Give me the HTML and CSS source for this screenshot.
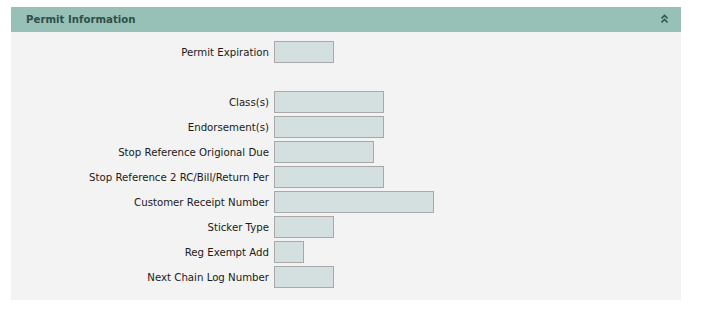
FILE: index.html
```html
<!DOCTYPE html>
<html lang="en">
<head>
    <meta charset="UTF-8">
    <title>Permit Information</title>
    <link rel="stylesheet" href="styles.css">
</head>
<body>

<div class="panel">
    <div class="panel-header">
        <span class="panel-title">Permit Information</span>
        <svg class="collapse" width="7" height="10" viewBox="0 0 7 10">
            <path d="M0.5 4.5 L3.5 1.5 L6.5 4.5 M0.5 8.5 L3.5 5.5 L6.5 8.5" fill="none" stroke="#2e5a52" stroke-width="1.6"/>
        </svg>
    </div>
    <div class="panel-body">
        <div class="row">
            <label>Permit Expiration</label>
            <input type="text" class="w60">
        </div>
        <div class="row"></div>
        <div class="row">
            <label>Class(s)</label>
            <input type="text" class="w110">
        </div>
        <div class="row">
            <label>Endorsement(s)</label>
            <input type="text" class="w110">
        </div>
        <div class="row">
            <label>Stop Reference Origional Due</label>
            <input type="text" class="w100">
        </div>
        <div class="row">
            <label>Stop Reference 2 RC/Bill/Return Per</label>
            <input type="text" class="w110">
        </div>
        <div class="row">
            <label>Customer Receipt Number</label>
            <input type="text" class="w160">
        </div>
        <div class="row">
            <label>Sticker Type</label>
            <input type="text" class="w60">
        </div>
        <div class="row">
            <label>Reg Exempt Add</label>
            <input type="text" class="w30">
        </div>
        <div class="row">
            <label>Next Chain Log Number</label>
            <input type="text" class="w60">
        </div>
    </div>
</div>

</body>
</html>
```
FILE: styles.css
```css
body {
    margin: 0;
    padding: 7px 25px 0 11px;
    background: white;
    font-family: "DejaVu Sans", Verdana, sans-serif;
    font-size: 10.2px;
    color: #1a1a1a;
}
.panel {
    width: 670px;
}
.panel-header {
    height: 25px;
    background-color: #97c1b6;
    display: flex;
    align-items: center;
    justify-content: space-between;
    padding: 0 13px 0 15px;
}
.panel-title {
    font-weight: bold;
    color: #2e4f4a;
    font-size: 10.2px;
}
.collapse {
    margin-top: -1px;
}
.panel-body {
    background-color: #f3f3f3;
    padding: 9px 0 9px 0;
}
.row {
    display: flex;
    align-items: center;
    height: 22px;
    margin-bottom: 3px;
}
.row label {
    width: 258px;
    text-align: right;
    padding-right: 5px;
}
.row input {
    height: 22px;
    box-sizing: border-box;
    margin: 0;
    padding: 0;
    background-color: #d3e0df;
    border: 1px solid #a8a8a8;
}
.w30 { width: 30px; }
.w60 { width: 60px; }
.w100 { width: 100px; }
.w110 { width: 110px; }
.w160 { width: 160px; }
```
